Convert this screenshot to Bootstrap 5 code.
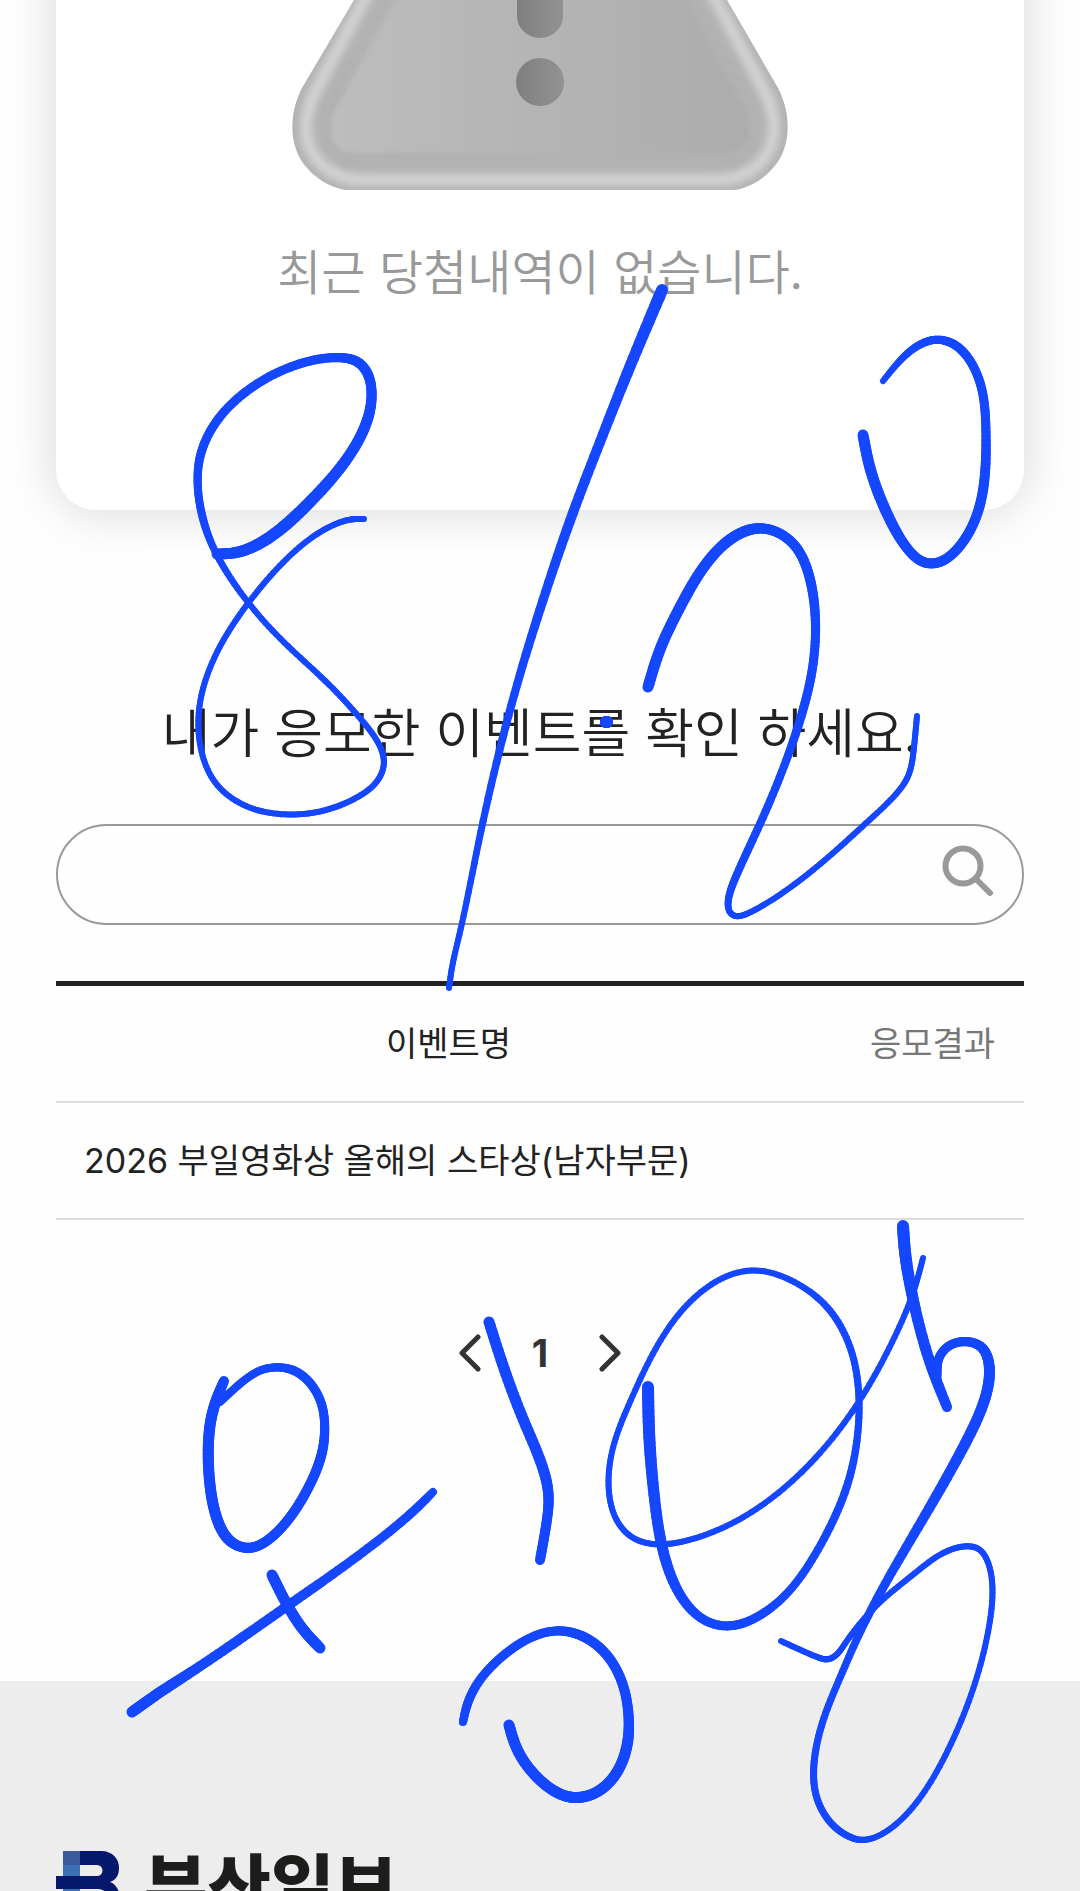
<!DOCTYPE html>
<html lang="ko">

<head>
  <meta charset="UTF-8">
  <meta name="viewport" content="width=device-width, initial-scale=1">
  <title>이벤트 응모내역</title>
  <link href="https://cdn.jsdelivr.net/npm/bootstrap@5.3.2/dist/css/bootstrap.min.css" rel="stylesheet">
  <style>
    body {
      font-family: "Noto Sans CJK KR", sans-serif;
      color: #222;
      background: #fefefe;
    }
    .page-wrap { padding: 0 56px; }
    .win-card {
      margin-top: -80px;
      padding: 80px 0 206px;
      border-radius: 40px;
      background: #fff;
      box-shadow: 0 0 50px rgba(0, 0, 0, .16);
    }
    .warn-icon { width: 496px; height: 190px; }
    .empty-text {
      margin-top: 44px;
      font-size: 48px;
      line-height: 70px;
      font-weight: 350;
      color: #999;
    }
    .check-title {
      margin: 182px 0 56px;
      font-size: 53px;
      line-height: 76px;
      font-weight: 350;
    }
    .search-box {
      height: 101px;
      padding: 0 28px 8px 48px;
      border: 2px solid #999;
      border-radius: 51px;
    }
    .search-box input { font-size: 34px; }
    .event-table {
      margin-top: 56px;
      border-top: 5px solid #222;
      font-family: Inter, "Noto Sans CJK KR", sans-serif;
      font-size: 34px;
      line-height: 51px;
    }
    .event-table th,
    .event-table td {
      height: 117px;
      padding: 0 28px;
      font-weight: 400;
      color: #222;
      background: none;
      border-bottom: 2px solid #ddd;
    }
    .event-table th { height: 118px; }
    .event-table .result-col {
      width: 183px;
      padding: 0;
      color: #777;
    }
    .pager {
      margin: 107px 0 302px;
      gap: 50px;
      font-family: Inter, sans-serif;
      font-size: 38px;
      line-height: 52px;
      font-weight: 700;
    }
    .pager a { color: #333; text-decoration: none; }
    .site-footer {
      padding: 170px 56px 0;
      background: #ededed;
    }
    .brand-name {
      font-size: 69px;
      line-height: 62px;
      font-weight: 900;
      color: #1d1d1b;
    }
    .pen-layer { pointer-events: none; }
  </style>
</head>

<body class="vh-100 overflow-hidden position-relative d-flex flex-column">
  <main class="page-wrap">
    <section class="win-card text-center">
      <svg class="warn-icon" viewBox="292 0 496 190" aria-hidden="true">
        <defs>
          <linearGradient id="face" x1="0" x2="1">
            <stop offset="0" stop-color="#bdbdbd"/>
            <stop offset="1" stop-color="#acacac"/>
          </linearGradient>
          <linearGradient id="bang" x1="0" x2="1">
            <stop offset="0" stop-color="#7f7f7f"/>
            <stop offset="1" stop-color="#929292"/>
          </linearGradient>
          <filter id="soft" x="-10%" y="-10%" width="120%" height="120%"><feGaussianBlur stdDeviation="4"/></filter>
          <filter id="soft2"><feGaussianBlur stdDeviation="2"/></filter>
          <clipPath id="rim"><path d="M354 0L302 88C288 115 290 145 303 163C314 178 329 187 345 190H735C751 187 766 178 777 163C790 145 792 115 778 88L727 0Z"/></clipPath>
        </defs>
        <g clip-path="url(#rim)">
          <rect x="280" y="0" width="520" height="190" fill="#b2b2b2"/>
          <path d="M375 -20L315 92C303 117 303 140 315 157C326 172 342 180 364 180H716C738 180 754 172 765 157C777 140 777 117 765 92L705 -20" fill="none" stroke="#d6d6d6" stroke-width="11" filter="url(#soft)"/>
          <path d="M404 -16L336 108C325 130 330 153 358 153H722C750 153 755 130 744 108L679 -16Z" fill="url(#face)" filter="url(#soft2)"/>
        </g>
        <path d="M517 -20H563V16A23 22 0 0 1 517 16Z" fill="url(#bang)"/>
        <circle cx="540" cy="82" r="24" fill="url(#bang)"/>
      </svg>
      <p class="empty-text mb-0">최근 당첨내역이 없습니다.</p>
    </section>

    <h2 class="check-title text-center">내가 응모한 이벤트를 확인 하세요.</h2>

    <form class="search-box d-flex align-items-center" onsubmit="return false">
      <input type="text" id="keyword" class="form-control border-0 bg-transparent shadow-none p-0" aria-label="이벤트 검색">
      <button type="submit" class="btn border-0 p-0 flex-shrink-0" aria-label="검색">
        <svg class="d-block" width="52" height="52" viewBox="0 0 52 52" fill="none" stroke="#999" stroke-width="6">
          <circle cx="21" cy="21" r="17.5"/>
          <path d="M34 34L48 48" stroke-linecap="round"/>
        </svg>
      </button>
    </form>

    <table class="event-table table mb-0">
      <thead>
        <tr class="align-middle">
          <th scope="col" class="text-center">이벤트명</th>
          <th scope="col" class="result-col text-center">응모결과</th>
        </tr>
      </thead>
      <tbody>
        <tr class="align-middle">
          <td>2026 부일영화상 올해의 스타상(남자부문)</td>
          <td class="result-col"></td>
        </tr>
      </tbody>
    </table>

    <nav class="pager d-flex justify-content-center align-items-center" aria-label="페이지">
      <a href="#" aria-label="이전">
        <svg class="d-block" width="24" height="38" viewBox="0 0 24 38" fill="none" stroke="#333" stroke-width="5" stroke-linecap="round" stroke-linejoin="round"><path d="M20 3L4 19L20 35"/></svg>
      </a>
      <a href="#" aria-current="page">1</a>
      <a href="#" aria-label="다음">
        <svg class="d-block" width="24" height="38" viewBox="0 0 24 38" fill="none" stroke="#333" stroke-width="5" stroke-linecap="round" stroke-linejoin="round"><path d="M4 3L20 19L4 35"/></svg>
      </a>
    </nav>
  </main>

  <footer class="site-footer flex-grow-1">
    <div class="d-flex align-items-start gap-4">
      <svg class="flex-shrink-0" width="64" height="76" viewBox="0 0 64 76" aria-hidden="true">
        <path d="M7 0H45C57 0 63 8 63 17C63 24 60 29 54 31C60 33 64 40 64 48C64 64 56 76 42 76H7V38H0V25H7Z" fill="#06186c"/>
        <path d="M24 14H41A5 5 0 0 1 41 25H24ZM24 38H42A10 10 0 0 1 42 60H24Z" fill="#ededed"/>
        <path d="M7 0H24V14H7Z" fill="#3a5a9c"/>
        <path d="M7 14H24V25H7ZM7 38H24V60H7Z" fill="#3c70b5"/>
      </svg>
      <span class="brand-name text-nowrap">부산일보</span>
    </div>
  </footer>

  <!-- 손글씨 메모 -->
  <svg id="pen" class="pen-layer position-absolute top-0 start-0 w-100" viewBox="0 0 1080 1891" stroke="#1447ff" stroke-linecap="round" fill="none" aria-hidden="true"></svg>

  <script>
    // [x, y, 굵기], 굵기를 생략하면 앞의 점과 같다
    const strokes = [
      [[217,554,11],[238,553],[270,538,12],[310,502],[347,460,11],[367,423],[372,398,10],[369,375],[358,361],[337,357,9],[300,363],[257,383],[220,415],[201,450],[197,480,8],[202,517],[215,553,7],[248,603,6],[283,642],[327,682],[360,718],[379,743],[385,763],[377,783],[353,800],[320,812],[290,815],[250,809],[216,786],[201,753],[198,713],[206,677],[223,640],[248,603],[280,565],[313,536],[340,522],[353,519],[364,519]],
      [[662,290,12],[630,366,11],[600,442,10],[570,520],[540,609,9],[512,701,8],[482,824,7],[462,925,6],[452,966],[449,988]],
      [[606,722,12],[607,722]],
      [[648,687,11],[660,648],[678,611],[703,567],[727,541],[747,530],[763,528,10],[780,533],[798,548],[811,581],[816,624,9],[813,668],[803,711],[787,759,8],[763,818],[737,874],[728,899,7],[729,912,6],[736,917],[753,911],[787,890],[823,862],[867,822],[901,789],[910,773],[914,747],[917,716]],
      [[863,435,11],[870,470],[887,514],[907,549,10],[923,563],[940,563],[960,547],[978,514],[985,478],[986,431,9],[983,391],[971,361],[955,344],[937,339,8],[920,344],[903,357,7],[883,381,6]],
      [[224,1381,10],[216,1400,11],[210,1423],[208,1453],[210,1487],[216,1517],[227,1539],[240,1547,10],[253,1548],[270,1539],[290,1518],[309,1487],[322,1455],[325,1430,9],[322,1403],[309,1381],[294,1370],[277,1367,8],[260,1370],[243,1381],[220,1402]],
      [[132,1712,11],[160,1692],[193,1671,10],[243,1637],[293,1602],[343,1567,9],[393,1529],[417,1508],[433,1492,8]],
      [[272,1575,11],[287,1605],[303,1630],[320,1648]],
      [[489,1322,11],[504,1369],[523,1420],[546,1476],[549,1500,10],[547,1520],[540,1560]],
      [[509,1725,11],[517,1751],[539,1780],[563,1796],[580,1798],[600,1791],[618,1772],[628,1743],[629,1719,10],[624,1686],[608,1655],[584,1636],[558,1630,9],[533,1636],[507,1652],[479,1680],[467,1704],[463,1722,8]],
      [[648,1387,12],[649,1436],[654,1495,11],[662,1549],[679,1595,10],[702,1620,9],[727,1627],[753,1620],[788,1594,8],[821,1545],[848,1486],[858,1436,7],[859,1389],[851,1347],[828,1306],[790,1279,6],[755,1269],[720,1278],[683,1308],[656,1347],[630,1402],[612,1448],[608,1490],[616,1521],[633,1539],[657,1545],[687,1541],[730,1525],[773,1498],[820,1454],[860,1401],[890,1347],[913,1295],[923,1258]],
      [[903,1226,12],[905,1255],[915,1309,11],[930,1364],[947,1407,10]],
      [[937,1377,9],[938,1358],[949,1345],[967,1341],[983,1347,10],[990,1366,11],[986,1398],[963,1448],[930,1507,10],[890,1575,9],[863,1625,8],[840,1678,7],[822,1722],[813,1768],[816,1798],[830,1823],[847,1836],[863,1841,6],[887,1832],[918,1802],[948,1751],[974,1688],[989,1629],[993,1587],[988,1561],[979,1548],[963,1546],[940,1554],[913,1575],[877,1604],[847,1640],[837,1655],[827,1660],[817,1657],[781,1641]]
    ]

    const dist = (p, q) => Math.hypot(q[0] - p[0], q[1] - p[1])

    // 앞뒤 점까지의 거리로 가중한 접선
    function tangent(pts, i, k) {
      const p = pts[i], a = pts[i - 1], b = pts[i + 1]
      if (!a) return (b[k] - p[k]) / dist(p, b)
      if (!b) return (p[k] - a[k]) / dist(a, p)
      const d1 = dist(a, p), d2 = dist(p, b)
      return ((p[k] - a[k]) / d1 * d2 + (b[k] - p[k]) / d2 * d1) / (d1 + d2)
    }

    function at(pts, i, k, t) {
      const h = dist(pts[i], pts[i + 1]), t2 = t * t, t3 = t2 * t
      return (2 * t3 - 3 * t2 + 1) * pts[i][k] + (t3 - 2 * t2 + t) * h * tangent(pts, i, k)
        + (3 * t2 - 2 * t3) * pts[i + 1][k] + (t3 - t2) * h * tangent(pts, i + 1, k)
    }

    // 이웃 점 평균으로 떨림을 줄인다
    function smooth(list, times) {
      for (; times > 0; times--) {
        list = list.map((p, i) => {
          const a = list[i - 1], b = list[i + 1]
          return a && b ? p.map((v, k) => (a[k] + v + b[k]) / 3) : p
        })
      }
      return list
    }

    const steps = 10
    let lines = ""
    for (const pts of strokes) {
      pts.forEach((p, i) => { if (p[2] === undefined) p[2] = pts[i - 1][2] })
      let dots = []
      for (let i = 0; i < pts.length - 1; i++) {
        for (let s = 0; s < steps; s++) {
          const t = s / steps
          dots.push([at(pts, i, 0, t), at(pts, i, 1, t), pts[i][2] + (pts[i + 1][2] - pts[i][2]) * t])
        }
      }
      dots.push(pts[pts.length - 1])
      dots = smooth(dots, 20)
      for (let i = 1; i < dots.length; i++) {
        const [x1, y1, w] = dots[i - 1], [x2, y2] = dots[i]
        lines += `<line x1="${x1.toFixed(2)}" y1="${y1.toFixed(2)}" x2="${x2.toFixed(2)}" y2="${y2.toFixed(2)}" stroke-width="${w.toFixed(2)}"/>`
      }
    }
    document.getElementById("pen").innerHTML = lines
  </script>
  <script src="https://cdn.jsdelivr.net/npm/bootstrap@5.3.2/dist/js/bootstrap.bundle.min.js"></script>
</body>

</html>
